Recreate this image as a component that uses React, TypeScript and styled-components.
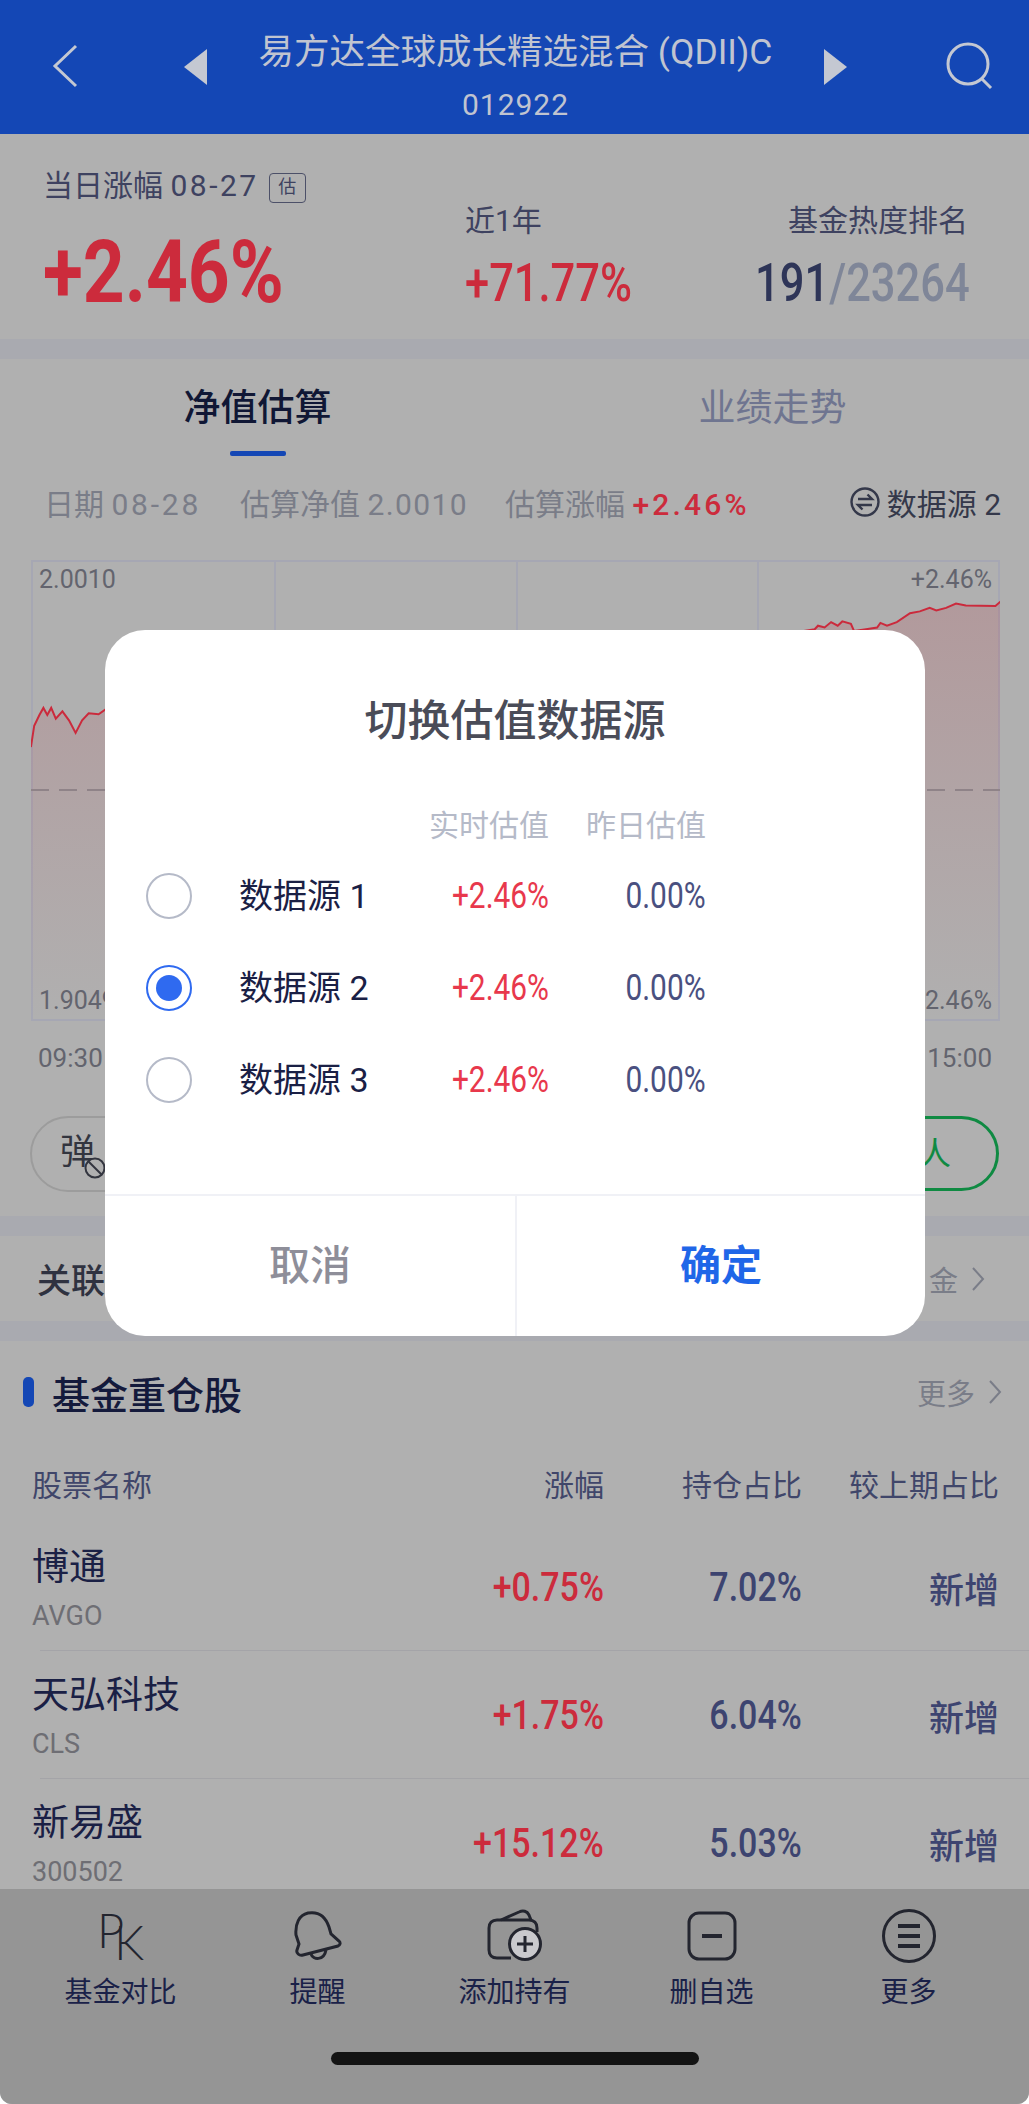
import React from 'react';
import styled, { createGlobalStyle } from 'styled-components';

const CJK = `Roboto, "Noto Sans CJK SC", sans-serif`;

const sources = ['数据源 1', '数据源 2', '数据源 3'];

const holdings = [
    { name: '博通', code: 'AVGO', change: '+0.75%', share: '7.02%' },
    { name: '天弘科技', code: 'CLS', change: '+1.75%', share: '6.04%' },
    { name: '新易盛', code: '300502', change: '+15.12%', share: '5.03%' },
];

// traced from the chart, x and y in reference pixels inside the frame
const zoomed = [
    [47, 580], [52, 520], [60, 490], [66, 470], [72, 490], [78, 470], [85, 500], [95, 480], [105, 505], [115, 540],
    [125, 505], [135, 485], [150, 488], [160, 475], [400, 430], [700, 380], [1000, 320], [1240, 250], [1245, 240],
    [1255, 245], [1265, 230], [1275, 240], [1282, 228], [1295, 235], [1300, 255], [1318, 250], [1335, 245], [1340, 232],
    [1350, 240], [1365, 230], [1385, 205], [1400, 200], [1415, 190], [1425, 197], [1440, 190], [1455, 178], [1470, 183],
    [1515, 185], [1523, 172],
];
const line = zoomed.map(([x, y]) => `${(x / 1.522 - 31).toFixed(1)},${(y / 2.8 - 20).toFixed(1)}`);

export default function App() {
    return (
        <>
            <GlobalStyle />
            <Page>
                <Main>
                    <Header>
                        <HeaderIcon width="30" height="46" viewBox="0 0 30 46">
                            <path d="M26 3 L5 23 L26 43" />
                        </HeaderIcon>
                        <Triangle width="24" height="36" viewBox="0 0 24 36">
                            <path d="M23 0 V36 L0 18 Z" />
                        </Triangle>
                        <HeaderTitle>
                            <FundName>易方达全球成长精选混合 (QDII)C</FundName>
                            <FundCode>012922</FundCode>
                        </HeaderTitle>
                        <Triangle width="24" height="36" viewBox="0 0 24 36">
                            <path d="M1 0 V36 L24 18 Z" />
                        </Triangle>
                        <HeaderIcon width="48" height="48" viewBox="0 0 48 48">
                            <circle cx="22" cy="22" r="20" />
                            <path d="M36 37 L45 46" />
                        </HeaderIcon>
                    </Header>

                    <Stats>
                        <StatMain>
                            <StatLabel>
                                当日涨幅 <DateDigits>08-27</DateDigits>
                                <EstTag>估</EstTag>
                            </StatLabel>
                            <BigRate>+2.46%</BigRate>
                        </StatMain>
                        <StatYear>
                            <StatLabel>近1年</StatLabel>
                            <MidRate>+71.77%</MidRate>
                        </StatYear>
                        <StatRank>
                            <RankLabel>基金热度排名</RankLabel>
                            <MidRate $dark>
                                191<RankTotal>/23264</RankTotal>
                            </MidRate>
                        </StatRank>
                    </Stats>
                    <Band />

                    <Tabs>
                        <Tab $active>净值估算</Tab>
                        <Tab>业绩走势</Tab>
                    </Tabs>

                    <InfoRow>
                        <InfoItem $width={196}>
                            日期 <InfoDigits $spacing={2.8}>08-28</InfoDigits>
                        </InfoItem>
                        <InfoItem $width={265}>
                            估算净值 <InfoDigits $spacing={1.4}>2.0010</InfoDigits>
                        </InfoItem>
                        <span>
                            估算涨幅 <InfoRate>+2.46%</InfoRate>
                        </span>
                        <SourceSwitch>
                            <svg width="30" height="30" viewBox="0 0 30 30" fill="none" stroke="#34384a" strokeWidth="2.4">
                                <circle cx="15" cy="15" r="13.5" />
                                <path d="M8 12 H22 L17.5 7.5 M22 18 H8 L12.5 22.5" />
                            </svg>
                            数据源 2
                        </SourceSwitch>
                    </InfoRow>

                    <Chart>
                        <GridCell />
                        <GridCell />
                        <GridCell />
                        <GridCell />
                        <ChartLines viewBox="0 0 969 461" preserveAspectRatio="none">
                            <defs>
                                <linearGradient id="area" x1="0" y1="0" x2="0" y2="1">
                                    <stop offset="0" stopColor="#b9404c" stopOpacity="0.2" />
                                    <stop offset="1" stopColor="#b9404c" stopOpacity="0" />
                                </linearGradient>
                            </defs>
                            <polygon points={`0,461 ${line.join(' ')} 969,461`} fill="url(#area)" />
                            <polyline points={line.join(' ')} fill="none" stroke="#cb2a3c" strokeWidth="2" />
                            <line x1="0" y1="230" x2="969" y2="230" stroke="#8f8388" strokeWidth="2" strokeDasharray="18 10" />
                        </ChartLines>
                        <ChartTag $top $left>2.0010</ChartTag>
                        <ChartTag $top>+2.46%</ChartTag>
                        <ChartTag $left>1.9049</ChartTag>
                        <ChartTag>-2.46%</ChartTag>
                    </Chart>
                    <Times>
                        <span>09:30</span>
                        <span>15:00</span>
                    </Times>

                    <PillRow>
                        <GreyPill>
                            弹
                            <Mute width="22" height="22" viewBox="0 0 22 22">
                                <circle cx="11" cy="11" r="9.5" />
                                <path d="M4 4 L18 18" />
                            </Mute>
                        </GreyPill>
                        <GreenPill>人</GreenPill>
                    </PillRow>
                    <Band />

                    <Related>
                        <RelatedTitle>关联</RelatedTitle>
                        <MoreLink>
                            金
                            <Chevron width="14" height="26" viewBox="0 0 14 26">
                                <path d="M2 2 L12 13 L2 24" />
                            </Chevron>
                        </MoreLink>
                    </Related>
                    <Band />

                    <SectionHead>
                        <SectionMark />
                        <SectionTitle>基金重仓股</SectionTitle>
                        <MoreLink>
                            更多
                            <Chevron width="14" height="26" viewBox="0 0 14 26">
                                <path d="M2 2 L12 13 L2 24" />
                            </Chevron>
                        </MoreLink>
                    </SectionHead>

                    <TableHead>
                        <span>股票名称</span>
                        <span>涨幅</span>
                        <span>持仓占比</span>
                        <span>较上期占比</span>
                    </TableHead>
                    {holdings.map((h) => (
                        <TableRow key={h.code}>
                            <NameBlock>
                                <StockName>{h.name}</StockName>
                                <StockCode>{h.code}</StockCode>
                            </NameBlock>
                            <Value $red>{h.change}</Value>
                            <Value>{h.share}</Value>
                            <NewTag>新增</NewTag>
                        </TableRow>
                    ))}
                </Main>

                <BottomBar>
                    <BarItems>
                        <BarItem>
                            <IconSlot>
                                <PkMark>
                                    <span>P</span>
                                    <PkK>K</PkK>
                                </PkMark>
                            </IconSlot>
                            基金对比
                        </BarItem>
                        <BarItem>
                            <IconSlot>
                                <BarIcon width="48" height="52" viewBox="0 0 48 52">
                                    <path d="M14 3 C26 1 32 8 35 17 L37 24 L45 31 C47 33 46 35 44 36 L9 45 C5 46 2 43 3 40 L5 34 L2 25 C1 14 5 5 14 3 Z" />
                                    <path d="M17 44 C19 50 30 51 32 40" />
                                </BarIcon>
                            </IconSlot>
                            提醒
                        </BarItem>
                        <BarItem>
                            <IconSlot>
                                <BarIcon width="56" height="56" viewBox="0 0 56 56">
                                    <path d="M24 50 H10 C5 50 2 47 2 42 V20 C2 15 5 12 10 12 H42 C47 12 50 15 50 20 V24" />
                                    <path d="M14 12 L32 4 C36 2 40 3 42 7 L44 12" />
                                    <PlusDisc cx="38" cy="36" r="15.5" />
                                    <path d="M38 28 V44 M30 36 H46" />
                                </BarIcon>
                            </IconSlot>
                            添加持有
                        </BarItem>
                        <BarItem>
                            <IconSlot>
                                <BarIcon width="50" height="50" viewBox="0 0 50 50">
                                    <rect x="2" y="2" width="46" height="46" rx="10" />
                                    <BarStroke d="M15 25 H35" />
                                </BarIcon>
                            </IconSlot>
                            删自选
                        </BarItem>
                        <BarItem>
                            <IconSlot>
                                <BarIcon width="56" height="56" viewBox="0 0 56 56">
                                    <circle cx="28" cy="28" r="25.5" />
                                    <BarStroke d="M17 18 H39 M17 28 H39 M17 38 H39" />
                                </BarIcon>
                            </IconSlot>
                            更多
                        </BarItem>
                    </BarItems>
                    <HomeBar />
                </BottomBar>

                <Scrim>
                    <Dialog>
                        <DialogTitle>切换估值数据源</DialogTitle>
                        <SourceGrid>
                            <SourceHead />
                            <SourceHead>实时估值</SourceHead>
                            <SourceHead>昨日估值</SourceHead>
                            {sources.map((s, i) => (
                                <React.Fragment key={s}>
                                    <SourceName>
                                        <Radio $on={i === 1} />
                                        <SourceLabel>{s}</SourceLabel>
                                    </SourceName>
                                    <SourceValue $red>+2.46%</SourceValue>
                                    <SourceValue>0.00%</SourceValue>
                                </React.Fragment>
                            ))}
                        </SourceGrid>
                        <DialogActions>
                            <ActionButton>取消</ActionButton>
                            <ActionButton $primary>确定</ActionButton>
                        </DialogActions>
                    </Dialog>
                </Scrim>
            </Page>
        </>
    );
}

const GlobalStyle = createGlobalStyle`
    html, body {
        margin: 0;
        padding: 0;
        background: #fff;
    }
    * {
        box-sizing: border-box;
    }
`;

const Page = styled.div`
    position: relative;
    width: 1029px;
    height: 2104px;
    display: flex;
    flex-direction: column;
    overflow: hidden;
    border-radius: 0 0 12px 12px;
    background: #b0b0b0;
    font-family: ${CJK};
`;

const Main = styled.div`
    flex: 1;
    min-height: 0;
    overflow: hidden;
`;

const Header = styled.div`
    height: 134px;
    display: flex;
    align-items: center;
    padding: 0 35px 0 50px;
    background: #1447b5;
`;

const HeaderIcon = styled.svg`
    flex: none;
    fill: none;
    stroke: #c4c8d2;
    stroke-width: 3;
    margin-top: -2px;
`;

const Triangle = styled.svg`
    flex: none;
    fill: #c4c8d2;
    margin: 0 0 0 104px;

    & ~ & {
        margin: 0 99px 0 0;
    }
`;

const HeaderTitle = styled.div`
    flex: 1;
    text-align: center;
    color: #c0c4d0;
`;

const FundName = styled.div`
    font-size: 35.5px;
    line-height: 40px;
    margin-top: 22px;
    white-space: nowrap;
`;

const FundCode = styled.div`
    font-size: 30px;
    line-height: 40px;
    margin-top: 13px;
    letter-spacing: 1px;
`;

const Stats = styled.div`
    height: 205px;
    display: flex;
    align-items: flex-end;
    padding: 0 59px 17px 43px;
`;

const StatMain = styled.div`
    width: 422px;
`;

const StatYear = styled.div`
    flex: 1;
    padding-bottom: 9px;
`;

const StatRank = styled.div`
    text-align: right;
    padding-bottom: 9px;
`;

const StatLabel = styled.div`
    font-size: 30px;
    line-height: 40px;
    white-space: nowrap;
    color: #3e4260;
`;

const RankLabel = styled(StatLabel)`
    margin-right: 2px;
`;

const DateDigits = styled.span`
    letter-spacing: 2.5px;
`;

const EstTag = styled.span`
    display: inline-block;
    width: 37px;
    height: 30px;
    margin-left: 10px;
    border: 1.5px solid #4c5068;
    border-radius: 4px;
    font-size: 18px;
    line-height: 26px;
    text-align: center;
    vertical-align: 3px;
`;

const BigRate = styled.div`
    margin-top: 16px;
    font-size: 88px;
    line-height: 100px;
    font-weight: 700;
    color: #cc2b3c;
    transform: scaleX(0.83);
    transform-origin: left center;
`;

const MidRate = styled.div<{ $dark?: boolean }>`
    margin-top: 12px;
    font-size: 53px;
    line-height: 60px;
    font-weight: 500;
    color: ${(props) => (props.$dark ? '#2e3558' : '#cc2b3c')};
    transform: scaleX(0.82);
    transform-origin: ${(props) => (props.$dark ? 'right' : 'left')} center;
`;

const RankTotal = styled.span`
    color: #7f8698;
`;

const Band = styled.div`
    height: 20px;
    background: #a9aab0;
`;

const Tabs = styled.div`
    height: 93px;
    display: grid;
    grid-template-columns: 515px 515px;
`;

const Tab = styled.div<{ $active?: boolean }>`
    position: relative;
    text-align: center;
    font-size: 37px;
    line-height: 99px;
    font-weight: ${(props) => (props.$active ? 500 : 400)};
    color: ${(props) => (props.$active ? '#101735' : '#6f7590')};

    ${(props) =>
        props.$active &&
        `&::after {
            content: '';
            position: absolute;
            left: 230px;
            bottom: 2px;
            width: 56px;
            height: 5px;
            border-radius: 2px;
            background: #1447b5;
        }`}
`;

const InfoRow = styled.div`
    height: 108px;
    padding: 0 28px 8px 44px;
    display: flex;
    align-items: center;
    font-size: 30px;
    color: #7a7d88;
    white-space: nowrap;
`;

const InfoItem = styled.span<{ $width: number }>`
    width: ${(props) => props.$width}px;
`;

const InfoDigits = styled.span<{ $spacing: number }>`
    letter-spacing: ${(props) => props.$spacing}px;
`;

const InfoRate = styled.span`
    font-weight: 500;
    letter-spacing: 3.2px;
    color: #cc2b3c;
`;

const SourceSwitch = styled.span`
    margin-left: auto;
    display: flex;
    align-items: center;
    gap: 7px;
    color: #34384a;
`;

const Chart = styled.div`
    position: relative;
    height: 461px;
    margin: 0 29px 0 31px;
    display: grid;
    grid-template-columns: repeat(4, 1fr);
    border: 2px solid #a6a7b3;
`;

const GridCell = styled.div`
    border-left: 2px solid #a6a7b3;

    &:first-child {
        border-left: none;
    }
`;

const ChartLines = styled.svg`
    position: absolute;
    inset: -2px;
    width: calc(100% + 4px);
    height: calc(100% + 4px);
`;

const ChartTag = styled.span<{ $top?: boolean; $left?: boolean }>`
    position: absolute;
    ${(props) => (props.$top ? 'top: 1px;' : 'bottom: 1px;')}
    ${(props) => (props.$left ? 'left: 6px;' : 'right: 6px;')}
    font-size: 25px;
    line-height: 34px;
    color: #63646e;
`;

const Times = styled.div`
    height: 95px;
    display: flex;
    justify-content: space-between;
    padding: 20px 37px 0 38px;
    font-size: 26px;
    line-height: 34px;
    color: #63646e;
`;

const PillRow = styled.div`
    height: 100px;
    display: flex;
    justify-content: space-between;
    align-items: flex-start;
    padding: 0 30px;
`;

const GreyPill = styled.div`
    position: relative;
    width: 300px;
    height: 76px;
    padding-left: 28px;
    border: 2px solid #9c9c9c;
    border-radius: 38px;
    font-size: 35px;
    line-height: 70px;
    color: #33353f;
`;

const Mute = styled.svg`
    position: absolute;
    left: 52px;
    top: 39px;
    fill: #b0b0b0;
    stroke: #33353f;
    stroke-width: 2;
`;

const GreenPill = styled.div`
    width: 300px;
    height: 75px;
    padding-right: 45px;
    border: 3px solid #0f8a42;
    border-radius: 38px;
    font-size: 32px;
    line-height: 70px;
    text-align: right;
    color: #0f8a42;
`;

const Related = styled.div`
    height: 85px;
    display: flex;
    align-items: center;
    justify-content: space-between;
    padding: 0 44px 0 37px;
`;

const RelatedTitle = styled.div`
    font-size: 34px;
    font-weight: 500;
    color: #2f3240;
`;

const MoreLink = styled.div`
    margin-left: auto;
    display: flex;
    align-items: center;
    gap: 13px;
    font-size: 29px;
    color: #7a7d88;
`;

const Chevron = styled.svg`
    fill: none;
    stroke: #7a7d88;
    stroke-width: 2;
`;

const SectionHead = styled.div`
    height: 102px;
    display: flex;
    align-items: center;
    padding: 0 27px 0 23px;
`;

const SectionMark = styled.div`
    width: 11px;
    height: 30px;
    margin-right: 18px;
    border-radius: 5px;
    background: #1447b5;
`;

const SectionTitle = styled.div`
    font-size: 38px;
    font-weight: 500;
    color: #141a3c;
`;

const TableHead = styled.div`
    height: 80px;
    display: grid;
    grid-template-columns: 1fr 140px 198px 197px;
    align-items: center;
    padding: 0 30px 0 32px;
    font-size: 30px;
    color: #40466a;

    span + span {
        text-align: right;
    }
`;

const TableRow = styled.div`
    position: relative;
    height: 128px;
    display: grid;
    grid-template-columns: 1fr 140px 198px 197px;
    align-items: center;
    padding: 0 30px 0 32px;
    text-align: right;

    &::after {
        content: '';
        position: absolute;
        left: 40px;
        right: 0;
        bottom: 0;
        height: 1px;
        background: #a4a4a8;
    }
`;

const NameBlock = styled.div`
    padding-top: 10px;
`;

const StockName = styled.div`
    font-size: 37px;
    line-height: 48px;
    text-align: left;
    color: #1a2045;
`;

const StockCode = styled.div`
    font-size: 27px;
    line-height: 48px;
    text-align: left;
    color: #6e6e74;
`;

const Value = styled.div<{ $red?: boolean }>`
    justify-self: end;
    font-size: 40px;
    font-weight: 500;
    white-space: nowrap;
    color: ${(props) => (props.$red ? '#cc2b3c' : '#3d4470')};
    transform: scaleX(0.85);
    transform-origin: right center;
`;

const NewTag = styled.div`
    font-size: 35px;
    font-weight: 500;
    color: #3d4470;
`;

const BottomBar = styled.div`
    height: 215px;
    flex: none;
    display: flex;
    flex-direction: column;
    background: #959595;
`;

const BarItems = styled.div`
    display: grid;
    grid-template-columns: repeat(5, 197px);
    padding: 18px 0 0 22px;
`;

const BarItem = styled.div`
    display: flex;
    flex-direction: column;
    align-items: center;
    font-size: 28px;
    line-height: 40px;
    color: #1a2148;
`;

const IconSlot = styled.div`
    height: 58px;
    margin-bottom: 8px;
    display: flex;
    align-items: center;
    justify-content: center;
`;

const BarIcon = styled.svg`
    fill: none;
    stroke: #23252f;
    stroke-width: 3;
`;

const BarStroke = styled.path`
    stroke-width: 4;
`;

const PlusDisc = styled.circle`
    fill: #c9c9cd;
`;

const PkMark = styled.div`
    display: flex;
    align-items: flex-start;
    font-family: Lato, Roboto, sans-serif;
    font-weight: 300;
    font-size: 47px;
    line-height: 44px;
    color: #23252f;
`;

const PkK = styled.span`
    margin: 12px 0 0 -10px;
`;

const HomeBar = styled.div`
    width: 368px;
    height: 13px;
    margin: 39px auto 0;
    border-radius: 7px;
    background: #141414;
`;

const Scrim = styled.div`
    position: absolute;
    inset: 0;
    display: flex;
    justify-content: center;
    padding: 630px 0 0 1px;
`;

const Dialog = styled.div`
    width: 820px;
    height: 706px;
    display: flex;
    flex-direction: column;
    border-radius: 40px;
    background: #fff;
`;

const DialogTitle = styled.div`
    padding-top: 63px;
    height: 172px;
    text-align: center;
    font-size: 43px;
    line-height: 56px;
    font-weight: 500;
    color: #4a4c58;
`;

const SourceGrid = styled.div`
    flex: 1;
    display: grid;
    grid-template-columns: 246px 120px 120px;
    column-gap: 37px;
    grid-template-rows: 48px;
    grid-auto-rows: 92px;
    padding-left: 41px;
    align-content: start;
`;

const SourceHead = styled.div`
    font-size: 30px;
    line-height: 48px;
    white-space: nowrap;
    color: #b5bac8;
`;

const SourceName = styled.div`
    display: flex;
    align-items: center;
    gap: 47px;
    font-size: 34px;
    white-space: nowrap;
    color: #1a2045;
`;

const SourceLabel = styled.span`
    padding-bottom: 6px;
`;

const Radio = styled.span<{ $on?: boolean }>`
    width: 46px;
    height: 46px;
    flex: none;
    border-radius: 50%;
    border: 2.5px solid ${(props) => (props.$on ? '#2f6af0' : '#b5bac8')};
    padding: 8px;
    background-clip: content-box;
    background-color: ${(props) => (props.$on ? '#2f6af0' : 'transparent')};
`;

const SourceValue = styled.div<{ $red?: boolean }>`
    align-self: center;
    justify-self: end;
    font-size: 36px;
    font-weight: 400;
    color: ${(props) => (props.$red ? '#e8384c' : '#4a5080')};
    transform: scaleX(0.83);
    transform-origin: right center;
`;

const DialogActions = styled.div`
    height: 142px;
    flex: none;
    display: grid;
    grid-template-columns: 1fr 1fr;
    border-top: 2px solid #f0f1f6;
`;

const ActionButton = styled.div<{ $primary?: boolean }>`
    text-align: center;
    font-size: 41px;
    line-height: 140px;
    font-weight: ${(props) => (props.$primary ? 700 : 500)};
    color: ${(props) => (props.$primary ? '#1f66e8' : '#8e8e99')};

    & + & {
        border-left: 2px solid #f0f1f6;
    }
`;
